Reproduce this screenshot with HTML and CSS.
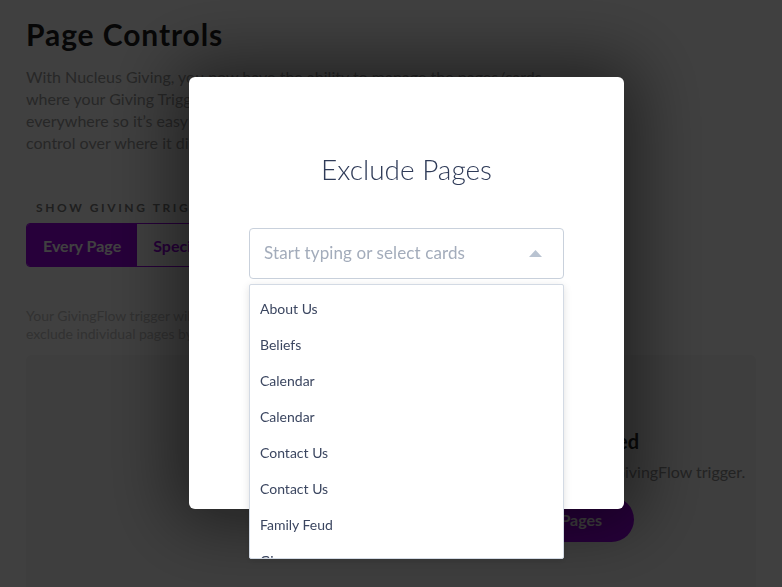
FILE: index.html
```html
<!DOCTYPE html>
<html lang="en">
<head>
<meta charset="utf-8">
<title>Page Controls</title>
<link rel="stylesheet" href="styles.css">
</head>
<body>
<div class="page">
  <h1 class="title">Page Controls</h1>
  <p class="intro">With Nucleus Giving, you now have the ability to manage the pages/cards where your Giving Trigger shows up. By default, the trigger is shown everywhere so it’s easy for people to give, but you now have complete control over where it displays.</p>
  <div class="label">Show Giving Trigger On</div>
  <div class="segmented">
    <button class="seg seg-active">Every Page</button>
    <button class="seg">Specific Pages</button>
  </div>
  <p class="note">Your GivingFlow trigger will show on every page of your app. You can exclude individual pages by clicking the button below.</p>
  <div class="card">
    <div class="art"></div>
    <div class="empty">
      <h2 class="empty-title">No Pages Excluded</h2>
      <p class="empty-text">All pages show your GivingFlow trigger.</p>
      <button class="pill">Exclude Pages</button>
    </div>
  </div>
</div>

<div class="overlay">
  <div class="modal">
    <h2 class="modal-title">Exclude Pages</h2>
    <div class="select">
      <div class="control">
        <span class="placeholder">Start typing or select cards</span>
        <svg class="caret" width="13" height="7" viewBox="0 0 13 7"><path d="M0 7 L6.5 0 L13 7 Z" fill="#b9c3d1"/></svg>
      </div>
      <ul class="menu">
        <li class="option">About Us</li>
        <li class="option">Beliefs</li>
        <li class="option">Calendar</li>
        <li class="option">Calendar</li>
        <li class="option">Contact Us</li>
        <li class="option">Contact Us</li>
        <li class="option">Family Feud</li>
        <li class="option">Give</li>
      </ul>
    </div>
  </div>
</div>
</body>
</html>
```

FILE: styles.css
```css
* { box-sizing: border-box; }
html, body { margin: 0; height: 100%; }
body {
  background: #ffffff;
  font-family: Lato, "Open Sans", sans-serif;
  overflow: hidden;
}
.page {
  padding: 16px 26px 0 26px;
}
.title {
  margin: 0;
  font-size: 30px;
  line-height: 36px;
  font-weight: 700;
  letter-spacing: 0.9px;
  color: #1c1c1c;
}
.intro {
  margin: 14px 0 0 0;
  max-width: 525px;
  font-size: 16px;
  line-height: 22px;
  color: #9c9c9c;
}
.label {
  margin-top: 46px;
  padding-left: 10px;
  font-size: 12px;
  line-height: 16px;
  font-weight: 700;
  letter-spacing: 2.6px;
  text-transform: uppercase;
  color: #7c7c7c;
}
.segmented {
  margin-top: 7px;
  display: inline-flex;
  height: 44px;
  border: 1px solid #9a00e6;
  border-radius: 4px;
  overflow: hidden;
}
.seg {
  border: 0;
  margin: 0;
  padding: 0 16px;
  font-family: inherit;
  font-size: 16px;
  font-weight: 700;
  background: #ffffff;
  color: #9a00e6;
}
.seg-active {
  background: #9a00e6;
  color: #ffffff;
}
.note {
  margin: 40px 0 0 0;
  max-width: 470px;
  font-size: 14px;
  line-height: 18px;
  color: #c4c4c4;
}
.card {
  margin-top: 12px;
  width: 730px;
  height: 260px;
  display: flex;
  background: #f5f5f5;
  border-radius: 6px;
  padding-top: 74px;
}
.art { width: 444px; flex: none; }
.empty {
  display: flex;
  flex-direction: column;
  align-items: flex-start;
  white-space: nowrap;
}
.empty-title {
  margin: 0;
  font-size: 20px;
  line-height: 24px;
  font-weight: 700;
  color: #262626;
}
.empty-text {
  margin: 8px 0 0 0;
  font-size: 16px;
  line-height: 22px;
  color: #8c8c8c;
}
.pill {
  margin-top: 14px;
  height: 45px;
  padding: 0 32px 0 31px;
  border: 0;
  border-radius: 23px;
  background: #9a00e6;
  color: #ffffff;
  font-family: inherit;
  font-size: 16px;
  font-weight: 700;
}

.overlay {
  position: fixed;
  inset: 0;
  background: rgba(0, 0, 0, 0.75);
  display: flex;
  align-items: center;
  justify-content: center;
  padding: 0 0 1px 31px;
}
.modal {
  position: relative;
  width: 435px;
  height: 432px;
  background: #ffffff;
  border-radius: 6px;
  padding: 75px 60px 0 60px;
  box-shadow: 0 0 70px 14px rgba(0, 0, 0, 0.5);
}
.modal-title {
  margin: 0;
  text-align: center;
  font-size: 28px;
  line-height: 34px;
  font-weight: 300;
  color: #2f3b58;
}
.select {
  position: relative;
  margin-top: 42px;
}
.control {
  height: 51px;
  border: 1px solid #c9d1dc;
  border-radius: 4px;
  display: flex;
  align-items: center;
  justify-content: space-between;
  padding: 0 21px 2px 14px;
}
.placeholder {
  font-size: 17px;
  letter-spacing: 0.1px;
  color: #a3acbb;
}
.caret { display: block; margin-top: 1px; }
.menu {
  position: absolute;
  top: 56px;
  left: 0;
  right: 0;
  height: 275px;
  margin: 0;
  padding: 6px 0 0 0;
  list-style: none;
  background: #ffffff;
  border: 1px solid #d3dae4;
  border-radius: 2px;
  overflow: hidden;
  box-shadow: 0 2px 8px rgba(0, 0, 0, 0.12);
}
.option {
  height: 36px;
  line-height: 36px;
  padding-left: 10px;
  font-size: 14px;
  color: #3b4660;
}
```
